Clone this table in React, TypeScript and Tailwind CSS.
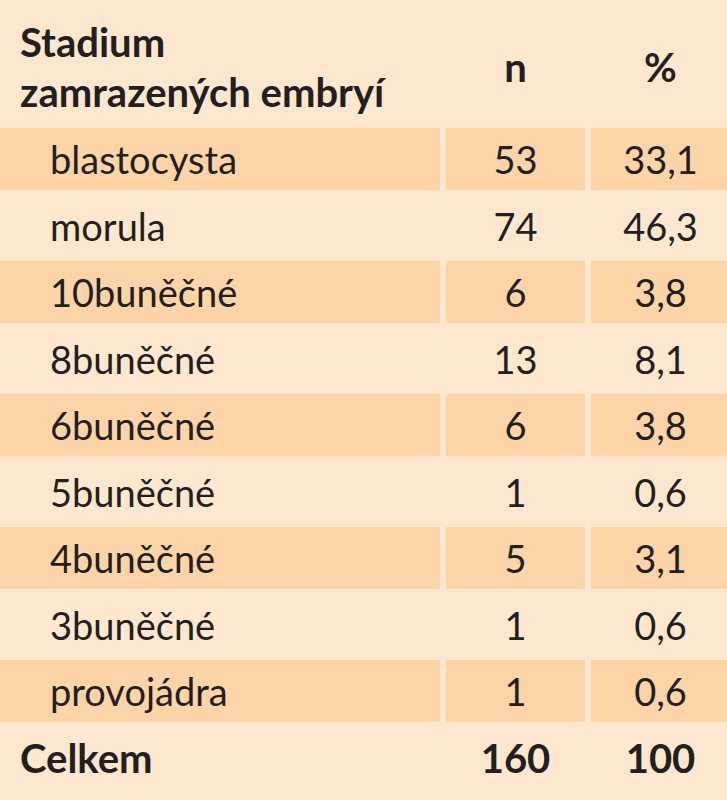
import React from 'react';

type Row = { stage: string; n: string; pct: string };

const rows: Row[] = [
  { stage: 'blastocysta', n: '53', pct: '33,1' },
  { stage: 'morula', n: '74', pct: '46,3' },
  { stage: '10buněčné', n: '6', pct: '3,8' },
  { stage: '8buněčné', n: '13', pct: '8,1' },
  { stage: '6buněčné', n: '6', pct: '3,8' },
  { stage: '5buněčné', n: '1', pct: '0,6' },
  { stage: '4buněčné', n: '5', pct: '3,1' },
  { stage: '3buněčné', n: '1', pct: '0,6' },
  { stage: 'provojádra', n: '1', pct: '0,6' },
];

const grid = 'grid grid-cols-[440px_139px_1fr] gap-x-[6px]';

export default function App() {
  return (
    <div
      className="min-h-screen w-[727px] overflow-hidden bg-[#fde8cf] text-[38px] leading-[50px] text-[#231f20]"
      style={{ fontFamily: 'Lato, "Open Sans", sans-serif' }}
    >
      <div className="flex flex-col gap-y-[4.5px]">
        {/* header */}
        <div className={clsxGrid('h-[123.5px] text-[40px] font-bold')}>
          <div className="pl-[20px] pt-[17px]">
            Stadium
            <br />
            zamrazených embryí
          </div>
          <div className="pt-[42px] text-center">n</div>
          <div className="pt-[42px]">
            <div className="w-[139px] text-center">%</div>
          </div>
        </div>

        {rows.map((r, i) => {
          const shade = i % 2 === 0 ? 'bg-[#fcd4a8]' : 'bg-transparent';
          return (
            <div key={r.stage} className={clsxGrid('h-[62px]')}>
              <div className={`${shade} flex items-center pl-[50px]`}>{r.stage}</div>
              <div className={`${shade} flex items-center justify-center`}>{r.n}</div>
              <div className={`${shade} flex items-center`}>
                <div className="w-[139px] text-center">{r.pct}</div>
              </div>
            </div>
          );
        })}

        {/* total */}
        <div className={clsxGrid('h-[62px] text-[40px] font-bold')}>
          <div className="flex items-center pl-[20px]">Celkem</div>
          <div className="flex items-center justify-center">160</div>
          <div className="flex items-center">
            <div className="w-[139px] text-center">100</div>
          </div>
        </div>
      </div>
    </div>
  );
}

function clsxGrid(extra: string) {
  return `${grid} ${extra}`;
}
